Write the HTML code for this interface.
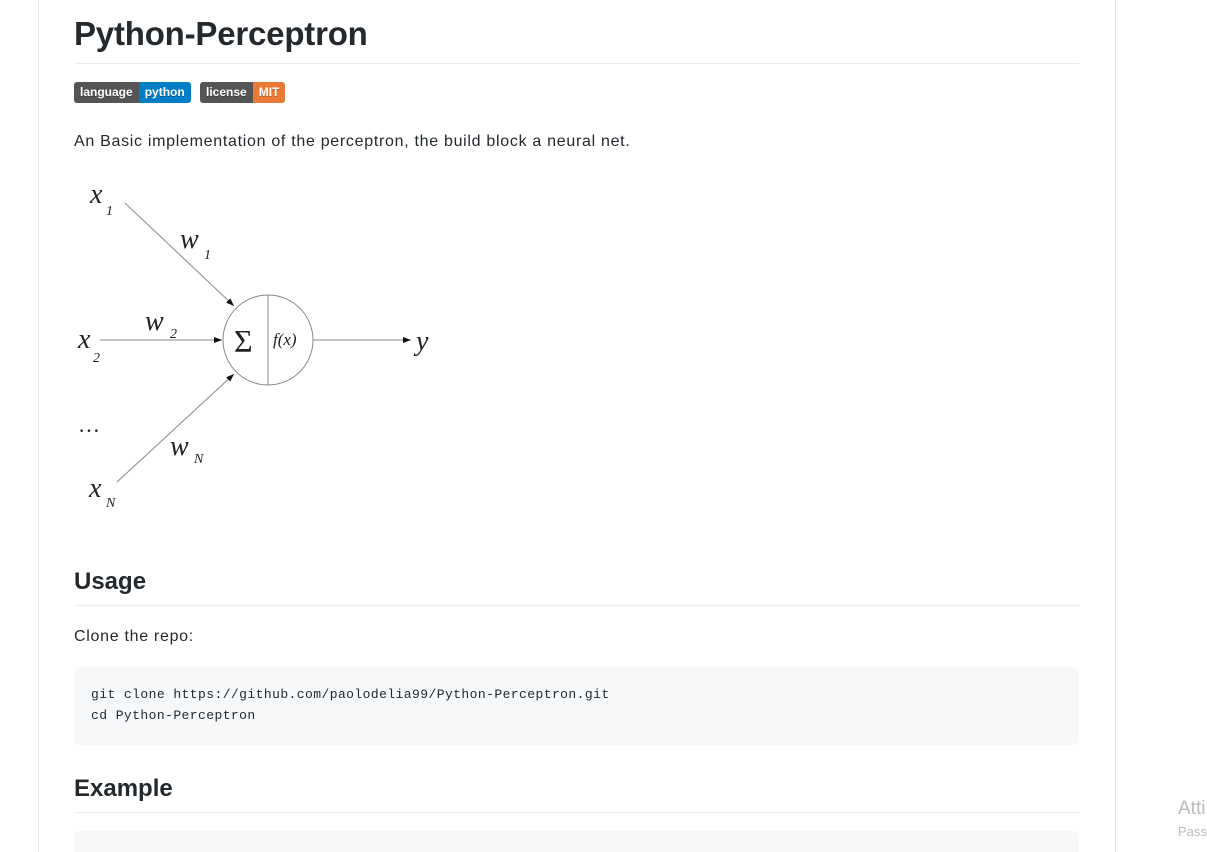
<!DOCTYPE html>
<html><head><meta charset="utf-8"><style>
html,body{margin:0;background:#fff;width:1207px;height:852px;overflow:hidden}
body{position:relative;font-family:"Liberation Sans",sans-serif;color:#24292e}
.vl{position:absolute;top:0;height:852px;width:1px;background:#e1e4e8}
.a{position:absolute;margin:0}
h1{position:absolute;left:74px;top:11px;margin:0;font-size:33px;font-weight:600;line-height:46px;letter-spacing:-0.2px}
.hr{position:absolute;left:74px;width:1005px;height:1px;background:#eaecef}
.badge{position:absolute;top:82px;height:21px;display:flex;border-radius:3px;overflow:hidden;font-size:12px;font-weight:bold;color:#fff;line-height:21px;text-shadow:0 1px 0 rgba(0,0,0,.3)}
.badge span{padding:0 6px}
h2{position:absolute;left:74px;margin:0;font-size:24px;font-weight:600;line-height:30px}
p{position:absolute;left:74px;margin:0;font-size:16px;line-height:24px;letter-spacing:0.7px}
.code{position:absolute;left:74px;width:1005px;background:#f6f8fa;border-radius:6px}
pre{margin:0;font-family:"Liberation Mono",monospace;font-size:13px;line-height:21px;padding:17px 17px;letter-spacing:0.43px}
svg text{font-family:"Liberation Serif",serif;font-style:italic;fill:#222}
</style></head><body>
<div class="vl" style="left:38px"></div>
<div class="vl" style="left:1115px"></div>
<h1>Python-Perceptron</h1>
<div class="hr" style="top:63px"></div>
<div class="badge" style="left:74px"><span style="background:#555">language</span><span style="background:#007ec6">python</span></div>
<div class="badge" style="left:200px"><span style="background:#555">license</span><span style="background:#e97b36">MIT</span></div>
<p style="top:130px">An Basic implementation of the perceptron, the build block a neural net.</p>
<svg class="a" style="left:0;top:0" width="460" height="530">
<defs><marker id="ar" markerWidth="8" markerHeight="6" refX="8" refY="3" orient="auto" markerUnits="userSpaceOnUse"><path d="M0,0L8,3L0,6z" fill="#111"/></marker></defs>
<g stroke="#888" stroke-width="1" fill="none">
<line x1="125" y1="203" x2="234" y2="306" marker-end="url(#ar)"/>
<line x1="100" y1="340" x2="222" y2="340" marker-end="url(#ar)"/>
<line x1="117" y1="482" x2="234" y2="374" marker-end="url(#ar)"/>
<line x1="313" y1="340" x2="411" y2="340" marker-end="url(#ar)"/>
<circle cx="268" cy="340" r="45"/>
<line x1="268" y1="295" x2="268" y2="385"/>
</g>
<text x="90" y="203" font-size="28">x</text><text x="106" y="215" font-size="14">1</text>
<text x="180" y="248" font-size="28">w</text><text x="204" y="259" font-size="14">1</text>
<text x="145" y="330" font-size="28">w</text><text x="170" y="338" font-size="14">2</text>
<text x="78" y="348" font-size="28">x</text><text x="93" y="362" font-size="14">2</text>
<text x="78" y="432" font-size="22" style="font-style:normal">…</text>
<text x="170" y="455" font-size="28">w</text><text x="194" y="463" font-size="14">N</text>
<text x="89" y="497" font-size="28">x</text><text x="106" y="507" font-size="14">N</text>
<text x="416" y="350" font-size="28">y</text>
<text x="234" y="352" font-size="32" style="font-style:normal">Σ</text>
<text x="273" y="345" font-size="17">f(x)</text>
</svg>
<h2 style="top:567px">Usage</h2>
<div class="hr" style="top:605px"></div>
<p style="top:625px">Clone the repo:</p>
<div class="code" style="top:667px;height:78px"><pre>git clone https://github.com/paolodelia99/Python-Perceptron.git
cd Python-Perceptron</pre></div>
<h2 style="top:774px">Example</h2>
<div class="hr" style="top:812px"></div>
<div class="code" style="top:831px;height:40px"></div>
<div class="a" style="left:1178px;top:798px;font-size:19px;color:#bbb">Atti</div>
<div class="a" style="left:1178px;top:824px;font-size:13px;color:#bbb">Pass</div>
</body></html>
